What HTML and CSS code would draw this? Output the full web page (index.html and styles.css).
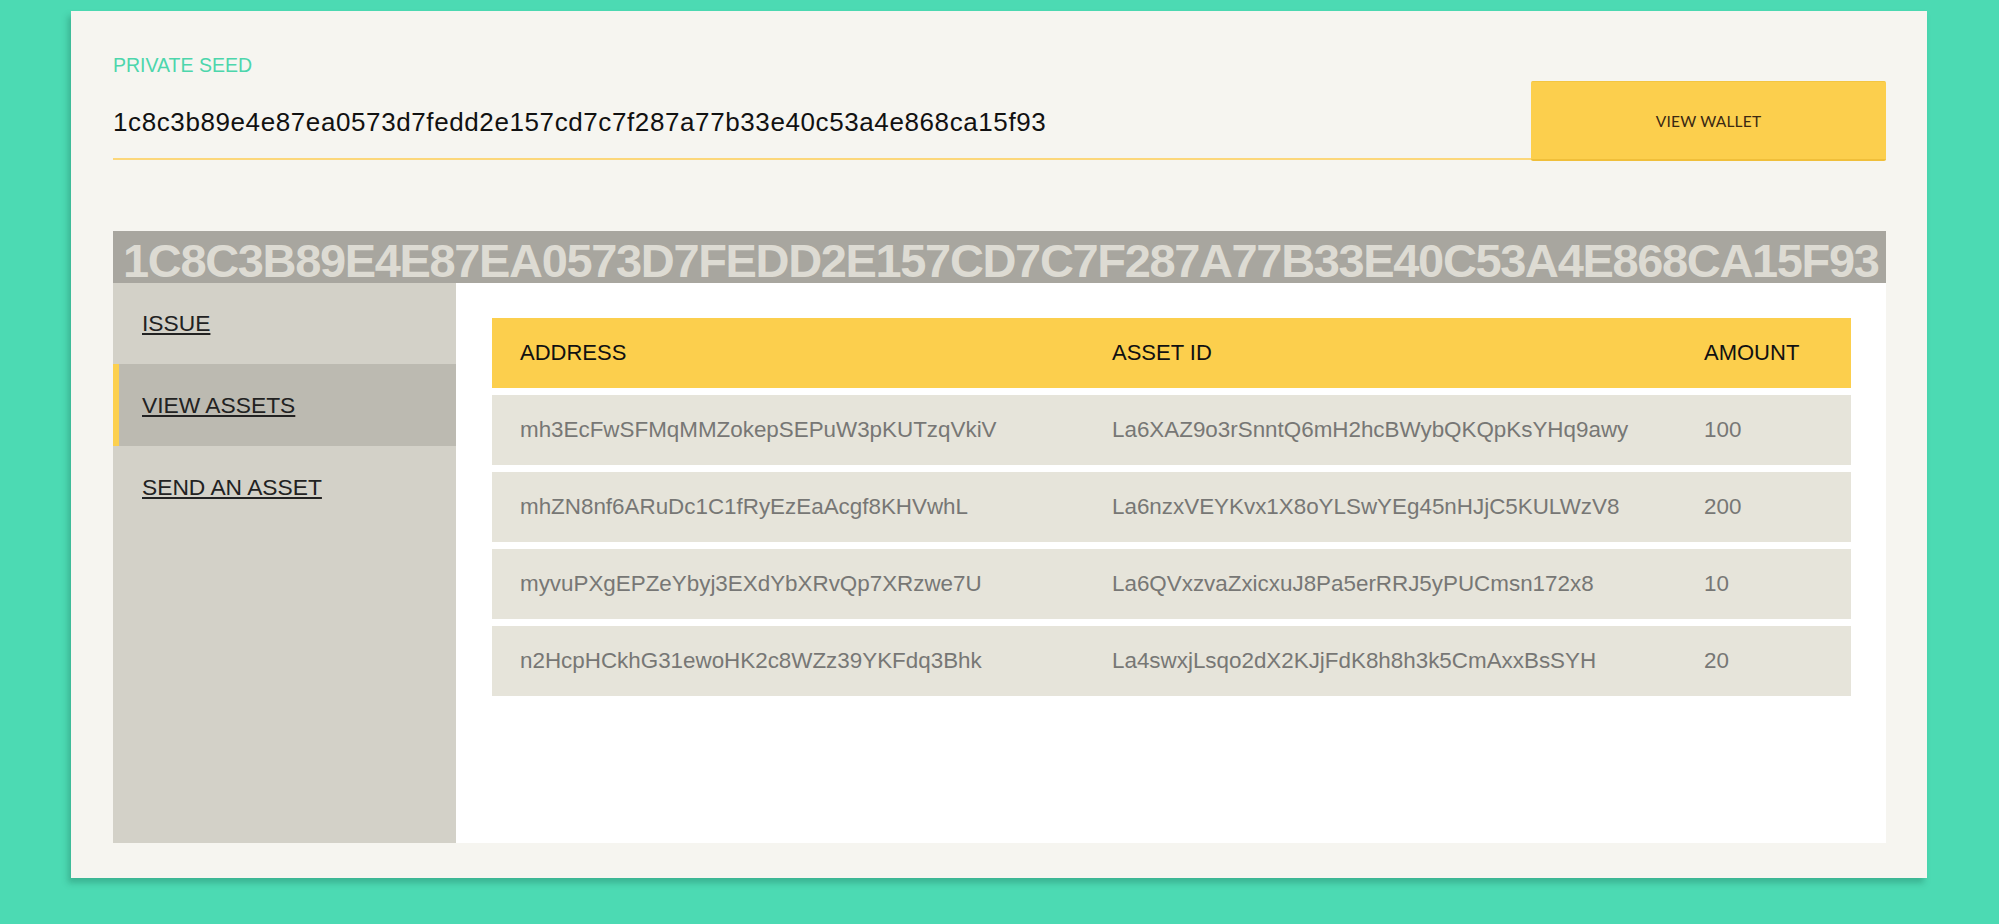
FILE: index.html
```html
<!DOCTYPE html>
<html lang="en">
<head>
<meta charset="utf-8">
<title>Wallet</title>
<link rel="stylesheet" href="styles.css">
</head>
<body>
<div class="card">
  <label class="seed-label" for="seed">PRIVATE SEED</label>
  <div class="seed-row">
    <input id="seed" class="seed-input" type="text" value="1c8c3b89e4e87ea0573d7fedd2e157cd7c7f287a77b33e40c53a4e868ca15f93">
    <button class="view-btn" type="button">VIEW WALLET</button>
  </div>

  <div class="wallet-title">1C8C3B89E4E87EA0573D7FEDD2E157CD7C7F287A77B33E40C53A4E868CA15F93</div>

  <div class="wallet">
    <nav class="sidebar">
      <a class="nav-item" href="#">ISSUE</a>
      <a class="nav-item active" href="#">VIEW ASSETS</a>
      <a class="nav-item" href="#">SEND AN ASSET</a>
    </nav>
    <main class="content">
      <div class="assets">
        <div class="arow head">
          <div class="cell">ADDRESS</div>
          <div class="cell">ASSET ID</div>
          <div class="cell">AMOUNT</div>
        </div>
        <div class="arow">
          <div class="cell">mh3EcFwSFMqMMZokepSEPuW3pKUTzqVkiV</div>
          <div class="cell">La6XAZ9o3rSnntQ6mH2hcBWybQKQpKsYHq9awy</div>
          <div class="cell">100</div>
        </div>
        <div class="arow">
          <div class="cell">mhZN8nf6ARuDc1C1fRyEzEaAcgf8KHVwhL</div>
          <div class="cell">La6nzxVEYKvx1X8oYLSwYEg45nHJjC5KULWzV8</div>
          <div class="cell">200</div>
        </div>
        <div class="arow">
          <div class="cell">myvuPXgEPZeYbyj3EXdYbXRvQp7XRzwe7U</div>
          <div class="cell">La6QVxzvaZxicxuJ8Pa5erRRJ5yPUCmsn172x8</div>
          <div class="cell">10</div>
        </div>
        <div class="arow">
          <div class="cell">n2HcpHCkhG31ewoHK2c8WZz39YKFdq3Bhk</div>
          <div class="cell">La4swxjLsqo2dX2KJjFdK8h8h3k5CmAxxBsSYH</div>
          <div class="cell">20</div>
        </div>
      </div>
    </main>
  </div>
</div>
</body>
</html>
```

FILE: styles.css
```css
html, body {
  margin: 0;
  padding: 0;
}
body {
  background: #4cdab3;
  font-family: "Liberation Sans", Arial, sans-serif;
  min-height: 924px;
  padding-top: 11px;
  box-sizing: border-box;
}
.card {
  margin: 0 72px 0 71px;
  background: #f6f5f0;
  padding: 44px 41px 35px 42px;
  box-shadow: -3px 5px 6px rgba(30, 110, 85, 0.35);
}
.seed-label {
  display: block;
  font-size: 19.5px;
  line-height: 20px;
  color: #4dd6ac;
}
.seed-row {
  display: flex;
  align-items: flex-start;
  margin-top: 6px;
}
.seed-input {
  flex: 1;
  min-width: 0;
  height: 79px;
  box-sizing: border-box;
  border: none;
  border-bottom: 2px solid #fcd77a;
  background: transparent;
  padding: 6px 0 0 0;
  margin: 0;
  font-family: "Liberation Sans", Arial, sans-serif;
  font-size: 26px;
  letter-spacing: 0.6px;
  color: #111;
  outline: none;
}
.view-btn {
  width: 355px;
  height: 80px;
  box-sizing: border-box;
  background: #fccf4d;
  border: none;
  border-top: 1px solid #f3c642;
  border-bottom: 2px solid #f0bf3a;
  border-radius: 2px;
  font-family: Lato, "Liberation Sans", sans-serif;
  font-size: 15.5px;
  color: #3a2812;
  letter-spacing: 0.2px;
  padding: 0;
  margin: 0;
}
.wallet-title {
  margin-top: 70px;
  height: 52px;
  box-sizing: border-box;
  background: #a8a69f;
  color: #dddbd3;
  font-weight: bold;
  font-size: 47px;
  line-height: 45px;
  padding-top: 7px;
  letter-spacing: -1.35px;
  padding-left: 10px;
  white-space: nowrap;
}
.wallet {
  display: flex;
  height: 560px;
}
.sidebar {
  width: 343px;
  flex: none;
  background: #d3d1c8;
  display: flex;
  flex-direction: column;
}
.nav-item {
  display: flex;
  align-items: center;
  height: 82px;
  box-sizing: border-box;
  padding-left: 29px;
  font-size: 22.8px;
  color: #222;
  text-decoration: underline;
  text-underline-offset: 2px;
  text-decoration-thickness: 1.5px;
}
.nav-item:first-child {
  height: 81px;
}
.nav-item.active {
  background: #bcbab1;
  border-left: 6px solid #fcd04e;
  padding-left: 23px;
}
.content {
  flex: 1;
  background: #fff;
  padding: 35px 35px 0 36px;
}
.assets {
  display: flex;
  flex-direction: column;
  gap: 7px;
}
.arow {
  display: grid;
  grid-template-columns: 592px 592px 1fr;
  height: 70px;
  align-items: center;
  background: #e6e4da;
  color: #777775;
  font-size: 22.4px;
}
.arow.head {
  background: #fccf4d;
  color: #111;
  font-size: 22px;
}
.cell {
  padding-left: 28px;
  white-space: nowrap;
}
```
